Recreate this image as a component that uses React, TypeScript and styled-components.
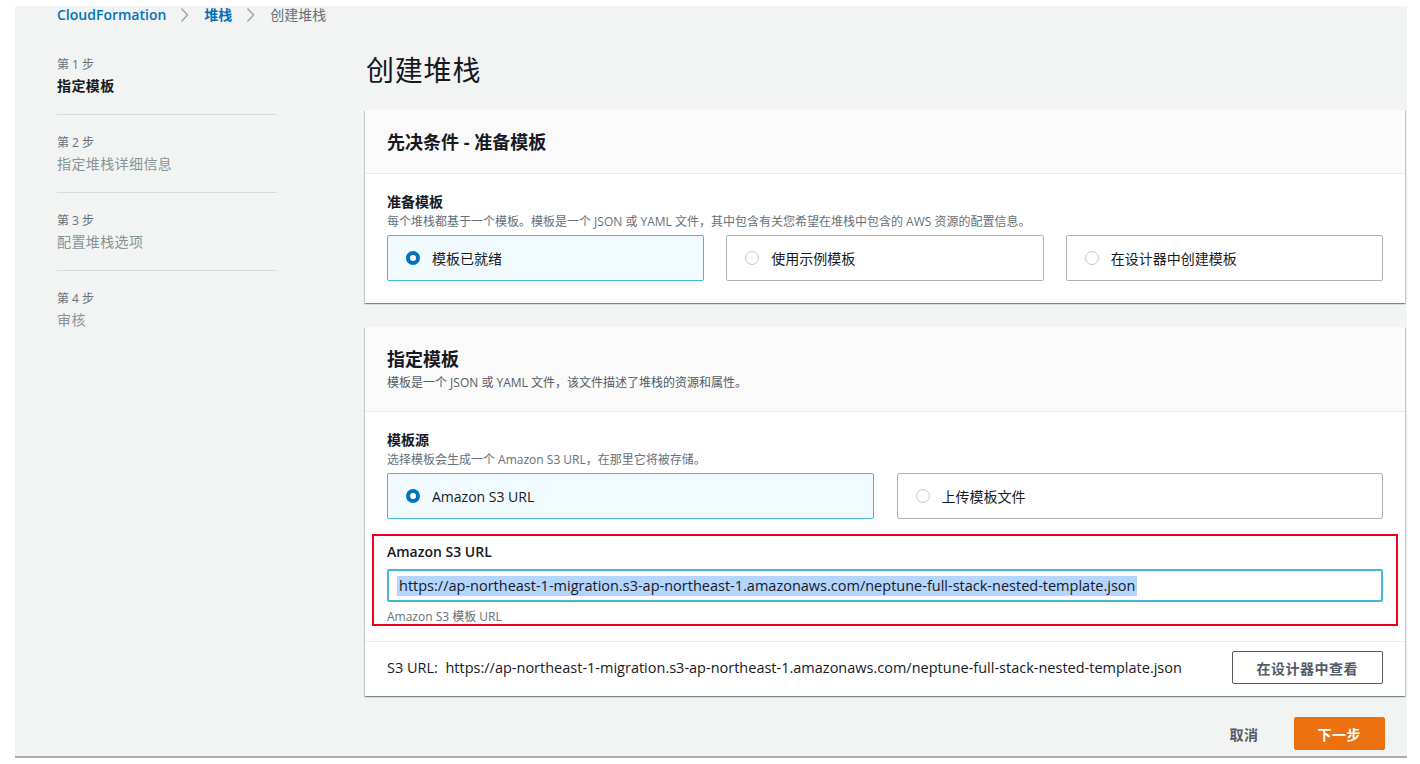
import React from "react";
import styled, { createGlobalStyle } from "styled-components";

const FONT = `"Open Sans", "Noto Sans CJK SC", sans-serif`;

const GlobalStyle = createGlobalStyle`
  html, body { margin: 0; padding: 0; background: #ffffff; }
  body { font-family: ${FONT}; color: #16191f; -webkit-font-smoothing: antialiased; }
  * { box-sizing: border-box; }
`;

const Frame = styled.div`
  margin: 6px 13px 0 15px;
  height: 752px;
  background: #f2f3f3;
  border-bottom: 2px solid #a9adb6;
  padding: 0 2px 0 42px;
  display: flex;
  flex-direction: column;
`;

const Breadcrumbs = styled.nav`
  display: flex;
  align-items: center;
  height: 18px;
  font-size: 14px;
  line-height: 18px;
`;

const Crumb = styled.span<{ $current?: boolean }>`
  color: ${(p) => (p.$current ? "#687078" : "#0073bb")};
  font-weight: ${(p) => (p.$current ? 400 : 600)};
`;

const ChevronBox = styled.span`
  display: inline-flex;
  margin: 0 15px 0 14px;
  width: 9px;
  height: 16px;
`;

const Chevron = () => (
  <ChevronBox>
    <svg width="9" height="16" viewBox="0 0 9 16">
      <polyline points="1.5,1.5 7.5,8 1.5,14.5" fill="none" stroke="#95a0a3" strokeWidth="1.3" />
    </svg>
  </ChevronBox>
);

const Columns = styled.div`
  display: flex;
  align-items: flex-start;
`;

const StepNav = styled.ol`
  list-style: none;
  margin: 0 88px 0 0;
  padding: 33px 0 0 0;
  width: 220px;
  flex: none;
`;

const StepItem = styled.li<{ $last?: boolean }>`
  padding: 0 0 18px 0;
  border-bottom: ${(p) => (p.$last ? "none" : "1px solid #d5dbdb")};
  & + & { padding-top: 20px; }
`;

const StepNum = styled.div`
  font-size: 12px;
  line-height: 16px;
  color: #687078;
  margin-bottom: 3px;
`;

const StepName = styled.div<{ $active?: boolean }>`
  font-size: 14px;
  line-height: 20px;
  letter-spacing: 0.4px;
  color: ${(p) => (p.$active ? "#16191f" : "#879596")};
  font-weight: ${(p) => (p.$active ? 700 : 400)};
`;

const Main = styled.main`
  flex: 1;
  display: flex;
  flex-direction: column;
`;

const PageTitle = styled.h1`
  margin: 28px 0 22px 1px;
  font-size: 28px;
  line-height: 36px;
  font-weight: 400;
  letter-spacing: 0.8px;
  color: #16191f;
`;

const Card = styled.section`
  background: #ffffff;
  box-shadow: 0 1px 1px 0 rgba(0, 28, 36, 0.3), 1px 1px 1px 0 rgba(0, 28, 36, 0.15),
    -1px 1px 1px 0 rgba(0, 28, 36, 0.15);
  margin-bottom: 24px;
`;

const CardHeader = styled.header`
  background: #fafafa;
  border-bottom: 1px solid #eaeded;
  padding: 21px 22px 20px;
`;

const CardTitle = styled.h2`
  margin: 0;
  font-size: 18px;
  line-height: 22px;
  font-weight: 700;
  color: #16191f;
`;

const CardDesc = styled.p`
  margin: 5px 0 0;
  font-size: 12px;
  line-height: 16px;
  color: #545b64;
`;

const CardBody = styled.div<{ $bottom?: number }>`
  padding: 18px 22px ${(p) => p.$bottom ?? 22}px;
`;

const FieldLabel = styled.div`
  font-size: 14px;
  line-height: 20px;
  font-weight: 600;
  color: #16191f;
`;

const FieldDesc = styled.div`
  margin-top: 2px;
  font-size: 12px;
  line-height: 16px;
  color: #687078;
`;

const TileGrid = styled.div<{ $cols: number; $gap: number }>`
  display: grid;
  grid-template-columns: repeat(${(p) => p.$cols}, 1fr);
  column-gap: ${(p) => p.$gap}px;
  margin-top: 5px;
`;

const Tile = styled.div<{ $selected?: boolean }>`
  height: 46px;
  display: flex;
  align-items: center;
  gap: 12px;
  padding-left: 18px;
  border: 1px solid ${(p) => (p.$selected ? "#44b9d6" : "#aab7b8")};
  background: ${(p) => (p.$selected ? "#f1faff" : "#ffffff")};
  border-radius: 2px;
  font-size: 14px;
  color: #16191f;
`;

const Radio = styled.span<{ $checked?: boolean }>`
  width: 14px;
  height: 14px;
  border-radius: 50%;
  flex: none;
  background: #ffffff;
  border: ${(p) => (p.$checked ? "4px solid #0073bb" : "1px solid #c4cccd")};
`;

const Highlight = styled.div`
  margin: 15px -15px 0;
  border: 2px solid #e8001c;
  padding: 6px 13px 0;
`;

const InputBox = styled.div`
  margin-top: 7px;
  height: 33px;
  border: 2px solid #44b9d6;
  border-radius: 2px;
  background: #ffffff;
  display: flex;
  align-items: center;
  padding-left: 8px;
  font-size: 14.5px;
  color: #16191f;
`;

const Selected = styled.span`
  background: #b4d5fe;
  padding: 0 2px;
  line-height: 20px;
`;

const Hint = styled.div`
  margin-top: 7px;
  font-size: 12px;
  line-height: 15px;
  color: #687078;
`;

const CardFooter = styled.footer`
  border-top: 1px solid #eaeded;
  padding: 9px 22px 12px;
  display: flex;
  align-items: center;
  justify-content: space-between;
`;

const FooterText = styled.span`
  font-size: 14.5px;
  color: #16191f;
`;

const Button = styled.button<{ $primary?: boolean; $plain?: boolean }>`
  font-family: ${FONT};
  font-size: 14px;
  font-weight: 700;
  letter-spacing: 0.5px;
  height: 33px;
  border-radius: 2px;
  cursor: pointer;
  padding: ${(p) => (p.$plain ? "0" : p.$primary ? "0 23px" : "0 24px")};
  color: ${(p) => (p.$primary ? "#ffffff" : "#545b64")};
  background: ${(p) => (p.$primary ? "#ec7211" : p.$plain ? "transparent" : "#ffffff")};
  border: ${(p) => (p.$primary ? "1px solid #ec7211" : p.$plain ? "none" : "1px solid #545b64")};
`;

const Actions = styled.div`
  display: flex;
  justify-content: flex-end;
  align-items: center;
  gap: 35px;
  margin-top: -3px;
  padding-right: 20px;
`;

const steps = [
  { num: "第 1 步", name: "指定模板", active: true },
  { num: "第 2 步", name: "指定堆栈详细信息" },
  { num: "第 3 步", name: "配置堆栈选项" },
  { num: "第 4 步", name: "审核" },
];

const URL = "https://ap-northeast-1-migration.s3-ap-northeast-1.amazonaws.com/neptune-full-stack-nested-template.json";

export default function App() {
  return (
    <>
      <GlobalStyle />
      <Frame>
        <Breadcrumbs>
          <Crumb>CloudFormation</Crumb>
          <Chevron />
          <Crumb>堆栈</Crumb>
          <Chevron />
          <Crumb $current>创建堆栈</Crumb>
        </Breadcrumbs>
        <Columns>
          <StepNav>
            {steps.map((s, i) => (
              <StepItem key={s.num} $last={i === steps.length - 1}>
                <StepNum>{s.num}</StepNum>
                <StepName $active={s.active}>{s.name}</StepName>
              </StepItem>
            ))}
          </StepNav>
          <Main>
            <PageTitle>创建堆栈</PageTitle>
            <Card>
              <CardHeader>
                <CardTitle>先决条件 - 准备模板</CardTitle>
              </CardHeader>
              <CardBody $bottom={22}>
                <FieldLabel>准备模板</FieldLabel>
                <FieldDesc>每个堆栈都基于一个模板。模板是一个 JSON 或 YAML 文件，其中包含有关您希望在堆栈中包含的 AWS 资源的配置信息。</FieldDesc>
                <TileGrid $cols={3} $gap={22}>
                  <Tile $selected>
                    <Radio $checked />
                    模板已就绪
                  </Tile>
                  <Tile>
                    <Radio />
                    使用示例模板
                  </Tile>
                  <Tile>
                    <Radio />
                    在设计器中创建模板
                  </Tile>
                </TileGrid>
              </CardBody>
            </Card>
            <Card>
              <CardHeader>
                <CardTitle>指定模板</CardTitle>
                <CardDesc>模板是一个 JSON 或 YAML 文件，该文件描述了堆栈的资源和属性。</CardDesc>
              </CardHeader>
              <CardBody $bottom={15}>
                <FieldLabel>模板源</FieldLabel>
                <FieldDesc>选择模板会生成一个 Amazon S3 URL，在那里它将被存储。</FieldDesc>
                <TileGrid $cols={2} $gap={23}>
                  <Tile $selected>
                    <Radio $checked />
                    Amazon S3 URL
                  </Tile>
                  <Tile>
                    <Radio />
                    上传模板文件
                  </Tile>
                </TileGrid>
                <Highlight>
                  <FieldLabel>Amazon S3 URL</FieldLabel>
                  <InputBox>
                    <Selected>{URL}</Selected>
                  </InputBox>
                  <Hint>Amazon S3 模板 URL</Hint>
                </Highlight>
              </CardBody>
              <CardFooter>
                <FooterText>S3 URL:&nbsp; {URL}</FooterText>
                <Button>在设计器中查看</Button>
              </CardFooter>
            </Card>
            <Actions>
              <Button $plain>取消</Button>
              <Button $primary>下一步</Button>
            </Actions>
          </Main>
        </Columns>
      </Frame>
    </>
  );
}
